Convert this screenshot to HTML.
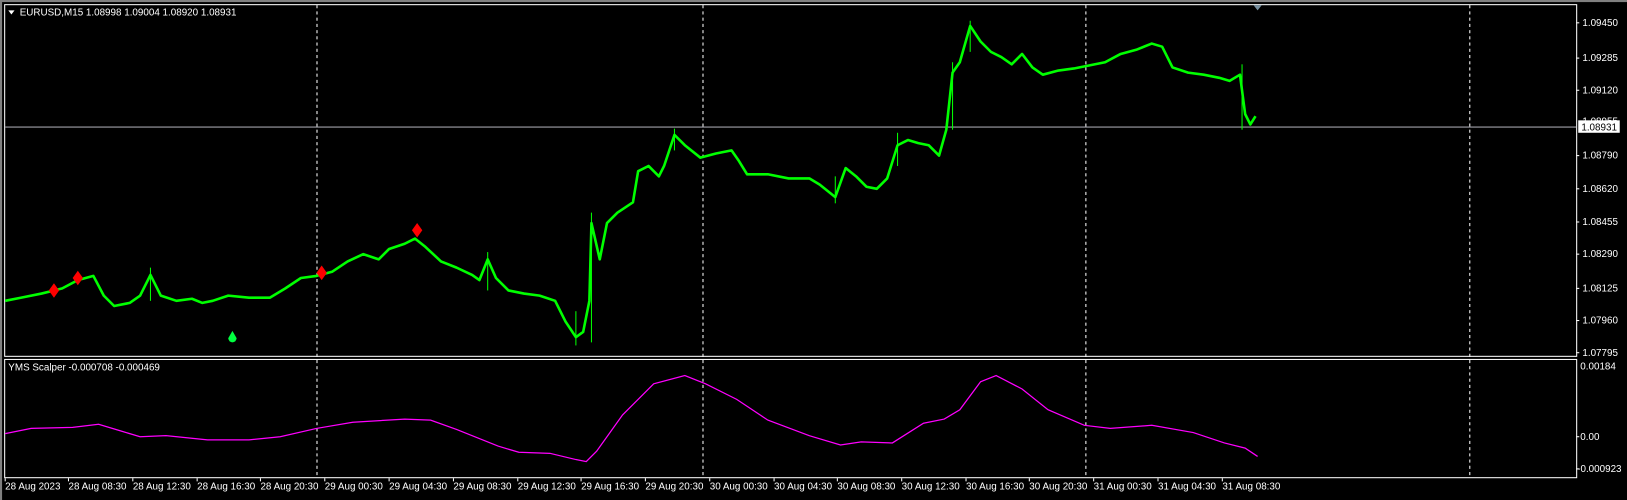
<!DOCTYPE html>
<html><head><meta charset="utf-8"><style>
html,body{margin:0;padding:0;background:#000;overflow:hidden}
svg{display:block}
text{font-family:"Liberation Sans",sans-serif;fill:#fff;font-size:9.5px}
</style></head><body>
<svg width="1627" height="500" viewBox="0 0 1568 482" preserveAspectRatio="none">
<rect x="0" y="0" width="1568" height="482" fill="#000"/>
<rect x="0" y="0" width="1568" height="2" fill="#808080"/>
<rect x="0" y="0" width="2" height="482" fill="#808080"/>
<rect x="4.5" y="4.5" width="1515" height="339" fill="none" stroke="#fff" stroke-width="1"/>
<rect x="4.5" y="346.5" width="1515" height="114" fill="none" stroke="#fff" stroke-width="1"/>
<g stroke="#fff" stroke-width="1" stroke-dasharray="3,3">
<line x1="305.5" y1="5" x2="305.5" y2="460"/>
<line x1="677.5" y1="5" x2="677.5" y2="460"/>
<line x1="1046.5" y1="5" x2="1046.5" y2="460"/>
<line x1="1416.5" y1="5" x2="1416.5" y2="460"/>
</g>
<line x1="5" y1="122.5" x2="1519" y2="122.5" stroke="#a0a0a8" stroke-width="1"/>
<polygon points="1208,5 1216,5 1212,10" fill="#7890a0"/>
<polyline fill="none" stroke="#00ff00" stroke-width="2.5" stroke-linejoin="round" points="5,290 20,287 40,283 52,280 60,278 75,270 90,266 100,285 110,295 125,292 135,285 145,265 155,285 170,290 185,288 195,292 205,290 220,285 240,287 260,287 275,278 290,268 305,266 320,262 335,252 350,245 365,250 375,240 390,235 400,230 410,238 425,252 440,258 455,265 462,270 470,250 478,268 490,280 505,283 520,285 535,290 545,310 555,325 562,320 568,290 570,215 578,250 585,215 595,205 610,195 615,165 625,160 635,170 640,160 650,130 660,140 675,152 690,148 705,145 712,155 720,168 740,168 760,172 780,172 790,178 805,190 815,162 825,170 835,180 845,182 855,172 865,140 875,135 885,138 895,140 905,150 912,125 918,70 925,60 935,25 945,40 955,50 965,55 975,62 985,52 995,65 1005,72 1020,68 1035,66 1050,63 1065,60 1080,52 1095,48 1110,42 1120,45 1130,65 1145,70 1160,72 1175,75 1185,78 1195,72 1200,110 1205,120 1210,112"/>
<g stroke="#00ff00" stroke-width="1">
<line x1="570" y1="205" x2="570" y2="330"/><line x1="650" y1="124" x2="650" y2="145"/>
<line x1="918" y1="60" x2="918" y2="125"/><line x1="935" y1="20" x2="935" y2="50"/>
<line x1="1197" y1="62" x2="1197" y2="125"/><line x1="145" y1="258" x2="145" y2="290"/>
<line x1="555" y1="300" x2="555" y2="333"/><line x1="470" y1="243" x2="470" y2="280"/>
<line x1="805" y1="170" x2="805" y2="196"/><line x1="865" y1="128" x2="865" y2="160"/>
</g>
<g fill="#ff0000">
<polygon points="52,273 57,280 52,287 47,280"/>
<polygon points="75,261 80,268 75,275 70,268"/>
<polygon points="310,256 315,263 310,270 305,263"/>
<polygon points="402,215 407,222 402,229 397,222"/>
</g>
<path d="M224,319 L228,326 A4,4 0 1 1 220,326 Z" fill="#00ff40"/>
<polyline fill="none" stroke="#ff00ff" stroke-width="1.2" points="5,418 30,413 70,412 95,409 115,415 135,421 160,420 200,424 240,424 270,421 305,413 340,407 390,404 415,405 440,414 480,430 500,436 530,437 555,443 565,445 575,435 600,400 630,370 660,362 680,370 710,385 740,405 780,420 810,429 830,426 860,427 890,408 910,404 925,395 945,368 960,362 985,375 1010,395 1045,410 1070,413 1110,410 1150,417 1180,427 1200,432 1212,440"/>
<polygon points="8,10 14,10 11,14" fill="#fff"/>
<text x="19" y="15">EURUSD,M15  1.08998 1.09004 1.08920 1.08931</text>
<text x="8" y="357">YMS Scalper -0.000708 -0.000469</text>
<g stroke="#fff"><line x1="1519" y1="22" x2="1522" y2="22"/><line x1="1519" y1="56" x2="1522" y2="56"/><line x1="1519" y1="87" x2="1522" y2="87"/><line x1="1519" y1="150" x2="1522" y2="150"/><line x1="1519" y1="182" x2="1522" y2="182"/><line x1="1519" y1="214" x2="1522" y2="214"/><line x1="1519" y1="245" x2="1522" y2="245"/><line x1="1519" y1="278" x2="1522" y2="278"/><line x1="1519" y1="309" x2="1522" y2="309"/><line x1="1519" y1="340" x2="1522" y2="340"/><line x1="1519" y1="421" x2="1522" y2="421"/><line x1="1519" y1="452" x2="1522" y2="452"/></g>
<text x="1525" y="25">1.09450</text>
<text x="1525" y="59">1.09285</text>
<text x="1525" y="90">1.09120</text>
<text x="1525" y="120">1.08955</text>
<text x="1525" y="153">1.08790</text>
<text x="1525" y="185">1.08620</text>
<text x="1525" y="217">1.08455</text>
<text x="1525" y="248">1.08290</text>
<text x="1525" y="281">1.08125</text>
<text x="1525" y="312">1.07960</text>
<text x="1525" y="343">1.07795</text>
<rect x="1521" y="116" width="40" height="12" fill="#fff"/>
<text x="1524" y="126" style="fill:#000">1.08931</text>
<text x="1523" y="356">0.00184</text>
<text x="1523" y="424">0.00</text>
<text x="1520" y="455">-0.000923</text>
<g stroke="#fff"><line x1="5" y1="461" x2="5" y2="464"/><line x1="66" y1="461" x2="66" y2="464"/><line x1="128" y1="461" x2="128" y2="464"/><line x1="190" y1="461" x2="190" y2="464"/><line x1="251" y1="461" x2="251" y2="464"/><line x1="313" y1="461" x2="313" y2="464"/><line x1="375" y1="461" x2="375" y2="464"/><line x1="437" y1="461" x2="437" y2="464"/><line x1="499" y1="461" x2="499" y2="464"/><line x1="560" y1="461" x2="560" y2="464"/><line x1="622" y1="461" x2="622" y2="464"/><line x1="684" y1="461" x2="684" y2="464"/><line x1="746" y1="461" x2="746" y2="464"/><line x1="807" y1="461" x2="807" y2="464"/><line x1="869" y1="461" x2="869" y2="464"/><line x1="931" y1="461" x2="931" y2="464"/><line x1="992" y1="461" x2="992" y2="464"/><line x1="1054" y1="461" x2="1054" y2="464"/><line x1="1116" y1="461" x2="1116" y2="464"/><line x1="1178" y1="461" x2="1178" y2="464"/></g>
<text x="5" y="472">28 Aug 2023</text>
<text x="66" y="472">28 Aug 08:30</text>
<text x="128" y="472">28 Aug 12:30</text>
<text x="190" y="472">28 Aug 16:30</text>
<text x="251" y="472">28 Aug 20:30</text>
<text x="313" y="472">29 Aug 00:30</text>
<text x="375" y="472">29 Aug 04:30</text>
<text x="437" y="472">29 Aug 08:30</text>
<text x="499" y="472">29 Aug 12:30</text>
<text x="560" y="472">29 Aug 16:30</text>
<text x="622" y="472">29 Aug 20:30</text>
<text x="684" y="472">30 Aug 00:30</text>
<text x="746" y="472">30 Aug 04:30</text>
<text x="807" y="472">30 Aug 08:30</text>
<text x="869" y="472">30 Aug 12:30</text>
<text x="931" y="472">30 Aug 16:30</text>
<text x="992" y="472">30 Aug 20:30</text>
<text x="1054" y="472">31 Aug 00:30</text>
<text x="1116" y="472">31 Aug 04:30</text>
<text x="1178" y="472">31 Aug 08:30</text>
</svg>
</body></html>
